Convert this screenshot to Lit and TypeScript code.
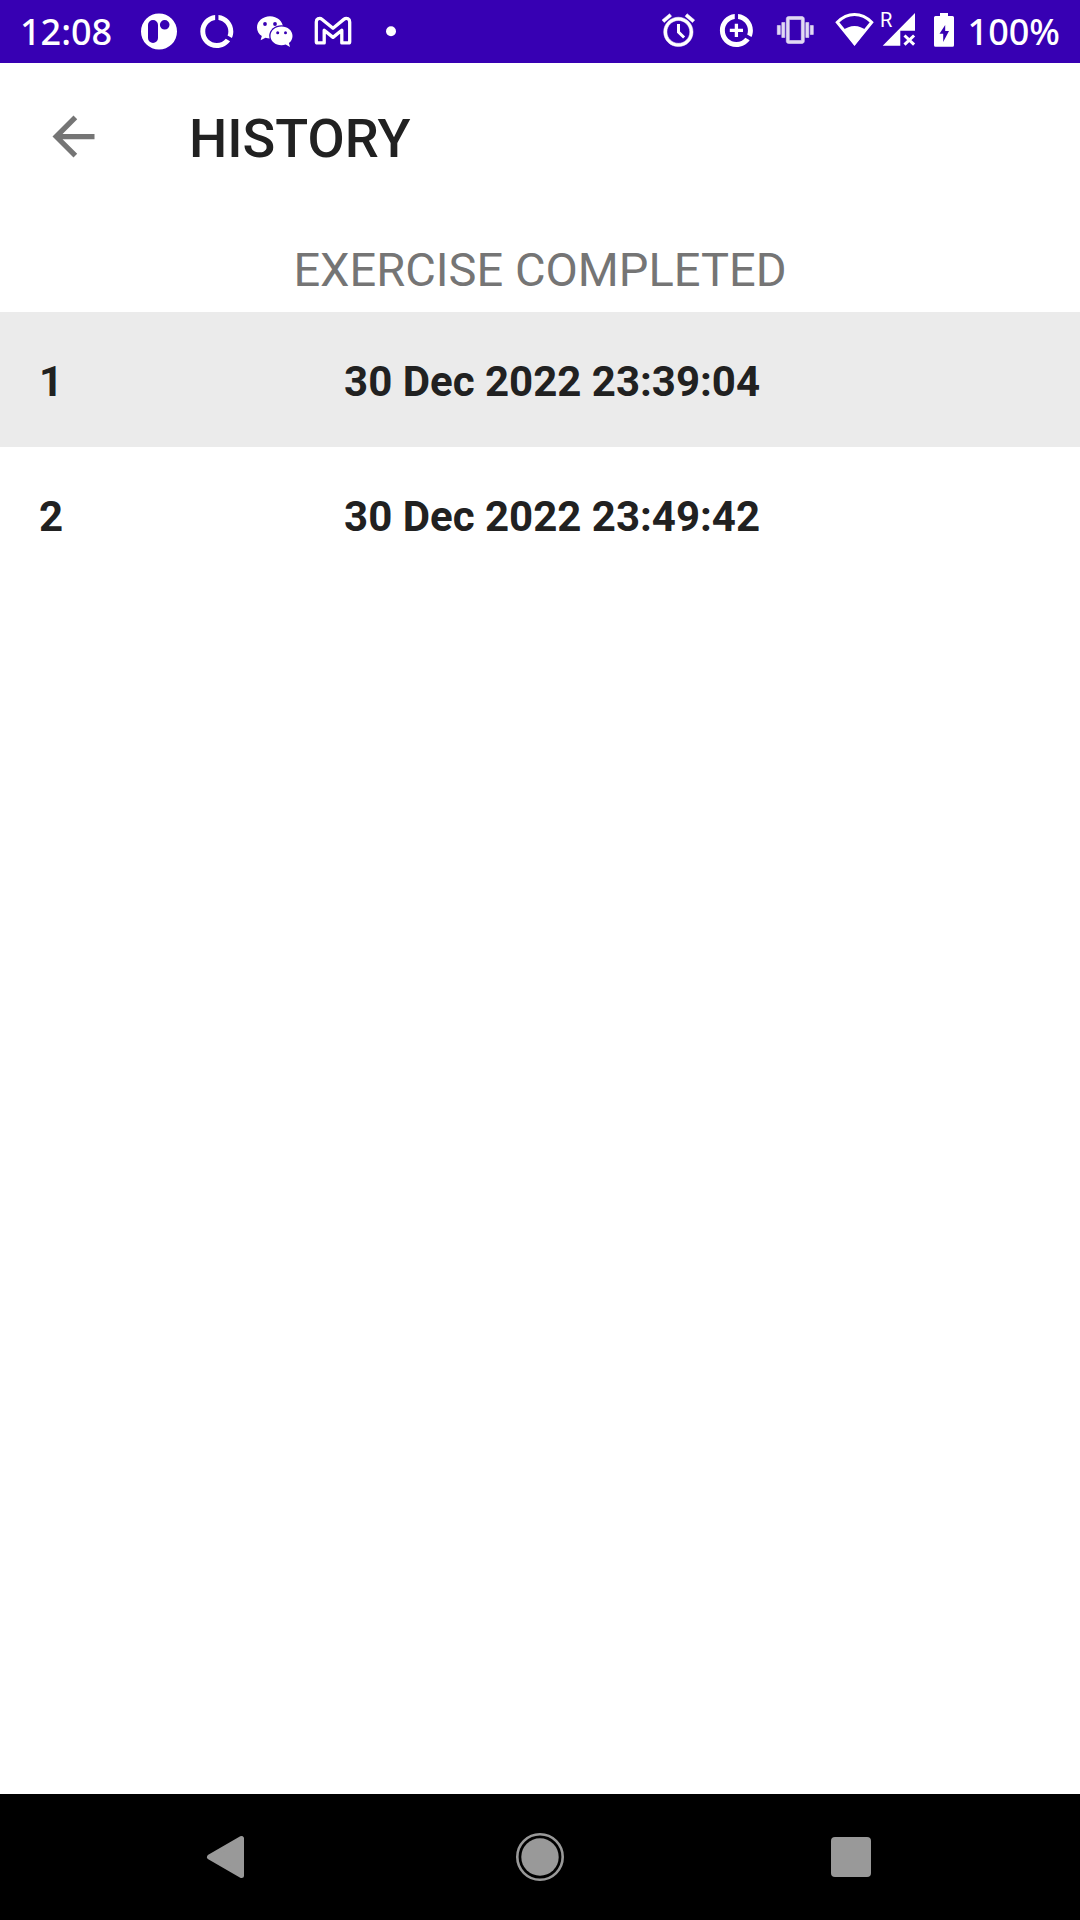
import { LitElement, html, css, svg } from "lit";
import { customElement, state } from "lit/decorators.js";

const usageRing = svg`<path d="M13 2.05v3.03c3.39.49 6 3.39 6 6.92 0 .9-.18 1.75-.48 2.54l2.6 1.53c.56-1.24.88-2.62.88-4.07 0-5.18-3.95-9.45-9-9.95zM12 19c-3.87 0-7-3.13-7-7 0-3.53 2.61-6.43 6-6.92V2.05c-5.06.5-9 4.76-9 9.95 0 5.52 4.47 10 9.99 10 3.31 0 6.24-1.61 8.06-4.09l-2.6-1.53C16.17 17.98 14.21 19 12 19z"/>`;

@customElement("status-bar")
export class StatusBar extends LitElement {
  static styles = css`
    :host {
      display: flex;
      align-items: center;
      height: 63px;
      padding: 0 20px;
      background: #3700b3;
      color: #fff;
      font-family: "Noto Sans", "Open Sans", sans-serif;
      font-size: 36px;
      font-weight: 500;
      line-height: 65px;
    }
    svg {
      display: block;
      fill: currentColor;
    }
    .clock {
      width: 110px;
    }
    .group {
      display: flex;
    }
    .end {
      margin-left: auto;
    }
    .level {
      min-width: 96px;
      text-align: right;
    }
    .signal {
      position: relative;
    }
    .roaming {
      position: absolute;
      left: 2px;
      top: 9px;
      font: 400 20px/24px Roboto, sans-serif;
    }
  `;

  render() {
    return html`
      <span class="clock">12:08</span>
      <div class="group">
        <svg width="58" height="63" viewBox="0 0 58 63" aria-hidden="true">
          <path fill-rule="evenodd" d="M29 13.5a18 18 0 1 1 0 36a18 18 0 1 1 0-36zM23 20a5 5 0 0 0-5 5v13a5 5 0 0 0 10 0V25a5 5 0 0 0-5-5zM34.700 20a4.800 4.800 0 1 0 0 9.600a4.800 4.800 0 1 0 0-9.600z"/>
        </svg>
        <svg width="58" height="63" viewBox="0 0 58 63" aria-hidden="true">
          <g transform="translate(9 11.600) scale(1.650)">${usageRing}</g>
        </svg>
        <svg width="58" height="63" viewBox="0 0 58 63" aria-hidden="true">
          <path d="M24 16.200c-7.200 0-13 5-13 11.200 0 3.600 1.900 6.600 4.800 8.700l-1.200 4.200 4.900-2.500c1.500.4 2.900.6 4.500.6 7.200 0 13-4.900 13-11s-5.800-11.200-13-11.200z"/>
          <ellipse cx="35.500" cy="35.800" rx="12.300" ry="10.600" fill="#3700b3"/>
          <path d="M35.500 26.600c-6.200 0-11 4.100-11 9.300s4.800 9.300 11 9.300c1.500 0 2.900-.3 4.200-.7l4.300 2.600-1.100-4.100c2.300-1.700 3.600-4.200 3.600-7.100 0-5.200-4.800-9.300-11-9.300z"/>
          <g fill="#3700b3">
            <circle cx="19" cy="24" r="1.900"/><circle cx="29" cy="24" r="1.900"/>
            <circle cx="31.700" cy="32.700" r="1.500"/><circle cx="39.500" cy="32.700" r="1.500"/>
          </g>
        </svg>
        <svg width="58" height="63" viewBox="0 0 58 63" aria-hidden="true">
          <path fill="none" stroke="currentColor" stroke-width="3.300" stroke-linejoin="round" d="M14 18.800c1.500-.8 3-.4 4.200.6L29 28.200l10.800-8.800c1.200-1 2.700-1.400 4.200-.6 1.300.7 1.700 1.800 1.700 3.200v19.700c0 .8-.4 1.200-1.200 1.200h-6.700V30.200L29 37.400l-8.800-7.200v12.700h-6.700c-.8 0-1.200-.4-1.200-1.200V22c0-1.400.4-2.500 1.700-3.200z"/>
        </svg>
        <svg width="58" height="63" viewBox="0 0 58 63" aria-hidden="true">
          <circle cx="29" cy="31.200" r="5"/>
        </svg>
      </div>
      <div class="group end">
        <svg width="58" height="63" viewBox="0 0 58 63" aria-hidden="true">
          <g transform="translate(8.800 11.700) scale(1.630)">
            <path stroke="currentColor" stroke-width=".3" d="M22 5.720l-4.600-3.860-1.290 1.530 4.600 3.860L22 5.720zM7.880 3.390L6.600 1.860 2 5.710l1.290 1.530 4.590-3.850zM12 4c-4.970 0-9 4.030-9 9s4.020 9 9 9c4.970 0 9-4.030 9-9s-4.030-9-9-9zm0 16c-3.870 0-7-3.130-7-7s3.130-7 7-7 7 3.130 7 7-3.130 7-7 7z"/>
          </g>
          <path fill="none" stroke="currentColor" stroke-width="3" d="M28.500 25v8.200l5.600 5.300"/>
        </svg>
        <svg width="58" height="63" viewBox="0 0 58 63" aria-hidden="true">
          <g transform="translate(8.600 11.600) scale(1.650)">${usageRing}<path d="M13 8h-2v3H8v2h3v3h2v-3h3v-2h-3z"/></g>
        </svg>
        <svg width="58" height="63" viewBox="0 0 58 63" aria-hidden="true">
          <path opacity=".85" stroke="currentColor" stroke-width=".4" transform="translate(11.300 13) scale(1.500)" d="M0 15h2V9H0v6zm3 2h2V7H3v10zm19-8v6h2V9h-2zm-3 8h2V7h-2v10zM16.500 3h-9C6.670 3 6 3.670 6 4.500v15c0 .83.67 1.500 1.500 1.500h9c.83 0 1.500-.67 1.500-1.500v-15c0-.83-.67-1.500-1.500-1.500zM16 19H8V5h8v14z"/>
        </svg>
        <svg width="54" height="63" viewBox="0 0 54 63" aria-hidden="true">
          <path fill="none" stroke="currentColor" stroke-width="3" d="M30.500 44.500L13.300 23.300Q21 15.500 30.500 15.500T47.700 23.300z"/>
          <path d="M30.500 46.500L19 31.500Q24 27 30.500 27T42 31.500z"/>
        </svg>
        <div class="signal">
          <svg width="46" height="63" viewBox="0 0 46 63" aria-hidden="true">
            <path d="M4.700 46.700L37 14v17.700H22.300v15z"/>
            <path fill="none" stroke="currentColor" stroke-width="3" d="M26.500 36.500l9.600 9.200M36.100 36.500l-9.600 9.200"/>
          </svg>
          <span class="roaming">R</span>
        </div>
        <svg width="40" height="63" viewBox="0 0 40 63" aria-hidden="true">
          <path fill-rule="evenodd" d="M16 14h8v3h4.500q1.500 0 1.500 1.500v27.700q0 1.500-1.500 1.500h-17q-1.500 0-1.500-1.500V18.500q0-1.500 1.500-1.500H16zM21.200 26L15.500 34.700h3.700v8.300L25 32h-3.800z"/>
        </svg>
        <span class="level">100%</span>
      </div>
    `;
  }
}

@customElement("nav-bar")
export class NavBar extends LitElement {
  static styles = css`
    :host {
      display: grid;
      grid-template-columns: repeat(3, 1fr);
      height: 126px;
      padding: 0 73px;
      background: #000;
    }
    button {
      display: flex;
      align-items: center;
      justify-content: center;
      padding: 0;
      border: 0;
      background: none;
      color: #999;
    }
    svg {
      display: block;
      fill: currentColor;
    }
  `;

  render() {
    return html`
      <button aria-label="Back">
        <svg width="60" height="60" viewBox="0 0 60 60">
          <path stroke="currentColor" stroke-width="5" stroke-linejoin="round" d="M10.500 30L42.500 11.500v37z"/>
        </svg>
      </button>
      <button aria-label="Home">
        <svg width="60" height="60" viewBox="0 0 60 60">
          <circle cx="30" cy="30" r="18.700"/>
          <circle cx="30" cy="30" r="22.700" fill="none" stroke="currentColor" stroke-width="2.600"/>
        </svg>
      </button>
      <button aria-label="Recent apps">
        <svg width="60" height="60" viewBox="0 0 60 60">
          <rect x="10" y="10" width="40" height="40" rx="4"/>
        </svg>
      </button>
    `;
  }
}

@customElement("app-root")
export class AppRoot extends LitElement {
  static styles = css`
    :host {
      display: flex;
      flex-direction: column;
      min-height: 100vh;
      background: #fff;
      color: #212121;
      font-family: Roboto, sans-serif;
    }
    .toolbar {
      display: flex;
      align-items: center;
      gap: 42px;
      height: 147px;
    }
    .back {
      display: flex;
      align-items: center;
      justify-content: center;
      width: 147px;
      height: 147px;
      padding: 0;
      border: 0;
      background: none;
      color: #757575;
    }
    .back svg {
      fill: currentColor;
    }
    .title {
      margin: 0;
      padding-top: 4px;
      font-size: 54px;
      line-height: 62px;
      font-weight: 500;
    }
    main {
      flex: 1;
    }
    .subtitle {
      margin: 0;
      padding: 32px 0 14px;
      text-align: center;
      font-size: 47px;
      line-height: 56px;
      font-weight: 400;
      color: #757575;
    }
    .list {
      margin: 0;
      padding: 0;
      list-style: none;
    }
    .row {
      display: flex;
      padding: 45px 39px 40px;
      font-size: 42px;
      line-height: 50px;
      font-weight: 700;
    }
    .row:nth-child(odd) {
      background: #ebebeb;
    }
    .date {
      flex: 1;
      text-align: center;
    }
  `;

  @state() private dates = ["30 Dec 2022 23:39:04", "30 Dec 2022 23:49:42"];

  render() {
    return html`
      <status-bar></status-bar>
      <header class="toolbar">
        <button class="back" aria-label="Navigate up">
          <svg width="63" height="63" viewBox="0 0 24 24">
            <path d="M20 11H7.830l5.590-5.590L12 4l-8 8 8 8 1.410-1.410L7.830 13H20v-2z"/>
          </svg>
        </button>
        <h1 class="title">HISTORY</h1>
      </header>
      <main>
        <h2 class="subtitle">EXERCISE COMPLETED</h2>
        <ol class="list">
          ${this.dates.map(
            (date, i) => html`<li class="row">
              <span>${i + 1}</span>
              <time class="date">${date}</time>
            </li>`
          )}
        </ol>
      </main>
      <nav-bar></nav-bar>
    `;
  }
}
